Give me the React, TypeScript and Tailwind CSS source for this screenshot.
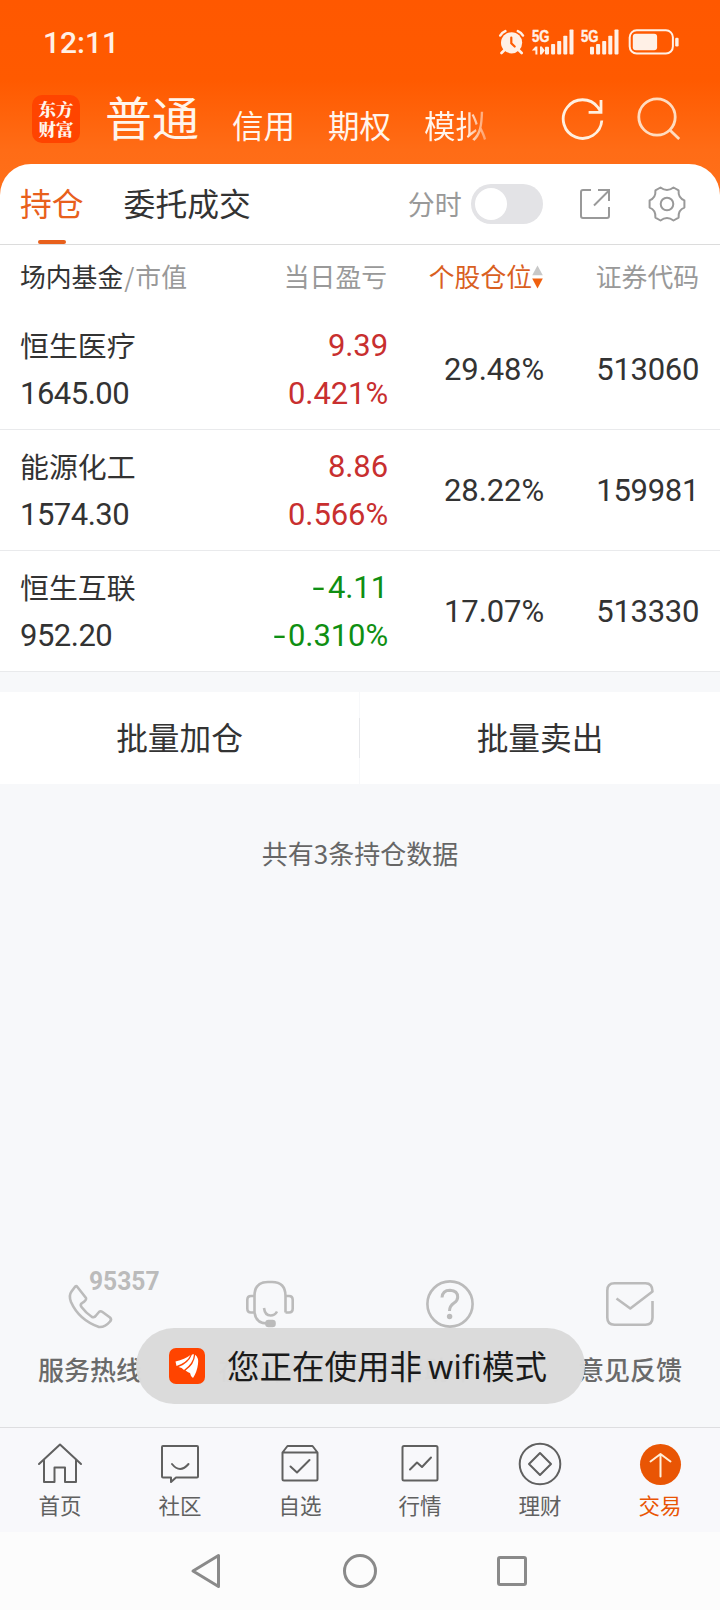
import type { ReactNode } from "react";

const CJK = "font-['Noto_Sans_CJK_SC',sans-serif]";
const NUM = "font-[Roboto,sans-serif]";

function StatusIcons() {
  const bars = [
    [0, 46.7],
    [6.1, 44],
    [12.2, 41],
    [18.3, 35.7],
    [24.5, 29.5],
  ];
  return (
    <svg width="184" height="32" viewBox="498 26 184 32" fill="#fff0e6">
      <circle cx="511.6" cy="42.8" r="10.6" />
      <g stroke="#fff0e6" strokeWidth="2.6" fill="none" strokeLinecap="round">
        <path d="M500.3 35.5a9 9 0 0 1 5-4.4M522.9 35.5a9 9 0 0 0-5-4.4" />
        <path d="M504.5 50l-3 3M518.7 50l3 3" />
      </g>
      <path d="M511.3 37.5v5.8l3.4 3.2" stroke="#ff5a00" strokeWidth="2.2" fill="none" strokeLinecap="round" />
      <g fontFamily="'Liberation Sans', sans-serif" fontWeight="700" fontSize="17" stroke="#fff0e6" strokeWidth="0.4">
        <text x="532" y="41.5" textLength="17.5" lengthAdjust="spacingAndGlyphs">5G</text>
        <text x="581" y="41.5" textLength="17.5" lengthAdjust="spacingAndGlyphs">5G</text>
      </g>
      <path d="M535.4 46.5h2v8h-2v-4h-3.600zM540 46.500h1.800l3 4-3 4h-1.800z" />
      {bars.map(([x, y]) => (
        <g key={x}>
          <rect x={545 + x} y={y} width="4" height={54.4 - y} rx="0.8" />
          <rect x={590 + x} y={y} width="4" height={54.4 - y} rx="0.8" />
        </g>
      ))}
      <rect x="629.7" y="30.3" width="43.2" height="23.2" rx="7" fill="none" stroke="#fff0e6" strokeWidth="2" />
      <rect x="632.8" y="33.7" width="24.3" height="16.6" rx="3" />
      <rect x="675.2" y="37.7" width="3.4" height="8.8" rx="1.2" />
    </svg>
  );
}

function GearIcon() {
  return (
    <svg width="40" height="40" viewBox="-20 -20 40 40" fill="none" stroke="#999" strokeWidth="2" strokeLinejoin="round">
      <path d="M-6.5 -16.5Q0 -11.5 6.5 -16.5L11.6 -13.6Q11 -6 17.4 -3.6V3.6Q11 6 11.6 13.6L6.5 16.5Q0 11.5 -6.5 16.5L-11.6 13.6Q-11 6 -17.4 3.6V-3.6Q-11 -6 -11.6 -13.6Z" />
      <circle r="6.3" />
    </svg>
  );
}

const holdings = [
  { name: "恒生医疗", value: "1645.00", pnl: "9.39", pct: "0.421%", share: "29.48%", code: "513060" },
  { name: "能源化工", value: "1574.30", pnl: "8.86", pct: "0.566%", share: "28.22%", code: "159981" },
  { name: "恒生互联", value: "952.20", pnl: "-4.11", pct: "-0.310%", share: "17.07%", code: "513330" },
];

function Signed({ text }: { text: string }) {
  const negative = text.startsWith("-");
  return (
    <div className={negative ? "text-[#0f8f12]" : "text-[#c82f2f]"}>
      {negative && <span className="mr-[3px] inline-block origin-right scale-x-[1.4]">-</span>}
      {negative ? text.slice(1) : text}
    </div>
  );
}

function Service({ icon, label }: { icon: ReactNode; label: string }) {
  return (
    <div className="flex w-[180px] flex-col items-center">
      <div className="h-[62px]">{icon}</div>
      <div className="mt-[19px] text-[26px] leading-[36px] font-medium text-[#6a6a6a]">{label}</div>
    </div>
  );
}

function Tab({ icon, label, active }: { icon: ReactNode; label: string; active?: boolean }) {
  return (
    <div className={`flex w-[120px] flex-col items-center ${active ? "text-[#e95504]" : "text-[#606060]"}`}>
      <svg width="48" height="48" viewBox="-24 -24 48 48" fill="none" stroke="currentColor" strokeWidth="2" strokeLinejoin="round" strokeLinecap="round">
        {icon}
      </svg>
      <div className="text-[21.5px] leading-[32px]">{label}</div>
    </div>
  );
}

export default function App() {
  return (
    <div className={`flex h-[1610px] w-[720px] flex-col overflow-hidden bg-[#f7f8fa] text-[#333] ${CJK}`}>
      <div className="bg-[linear-gradient(to_bottom,#ff5800_0px,#ff5a00_80px,#ff6c16_150px,#ff701a_195px)]">
        <div className="flex h-[84px] items-center justify-between pr-[38px] pl-[43px]">
          <div className={`${NUM} pt-[1px] text-[30px] leading-[30px] font-medium text-[#fff0e6]`}>12:11</div>
          <StatusIcons />
        </div>

        <div className="flex h-[80px] items-start pt-[11px] pl-[32px] text-[#fff5ec]">
          <div className="flex h-[48px] w-[48px] flex-col items-center justify-center rounded-[10px] bg-[#ff4400] pb-[1px] font-['Noto_Serif_CJK_SC','Noto_Sans_CJK_SC',serif] text-[17.5px] leading-[20px] font-black">
            <span>东方</span>
            <span>财富</span>
          </div>
          <div className="-mt-[6px] ml-[25px] text-[47px] leading-[54px]">普通</div>
          <div className="mt-[11px] flex gap-[33px] pl-[33px] text-[31.5px] leading-[36px]">
            <span>信用</span>
            <span>期权</span>
            <span className="bg-[linear-gradient(to_right,#fff5ec_65%,#ff9a60_100%)] bg-clip-text text-transparent">模拟</span>
          </div>
          <svg className="mt-[3px] ml-[74px]" width="44" height="44" viewBox="562 98 44 44" fill="none" stroke="#fff0e0" strokeWidth="2.8">
            <path d="M602.8 120.5A19.3 19.3 0 1 1 599 107.5L602 112M602 100v12.3h-12.4" />
          </svg>
          <svg className="mt-[1px] ml-[30px]" width="46" height="46" viewBox="636 96 46 46" fill="none" stroke="#ffdcc0" strokeWidth="2.8">
            <circle cx="658" cy="117" r="18.2" />
            <path d="M670.8 130l9.4 9" />
          </svg>
        </div>

        <div className="flex h-[81px] rounded-t-[31px] border-b border-[#dcdcdc] bg-white pl-[20px]">
          <div className="flex flex-col items-center text-[31.8px] leading-[36px] text-[#e8601c]">
            <div className="mt-[20px] h-[56px]">持仓</div>
            <div className="h-[4px] w-[28px] rounded-[2px] bg-[#e8601c]" />
          </div>
          <div className="mt-[20px] ml-[40px] text-[31.8px] leading-[36px]">委托成交</div>
          <div className="mt-[22px] ml-[157px] text-[27px] leading-[36px] text-[#999]">分时</div>
          <div className="mt-[20px] ml-[9px] flex h-[40px] w-[72px] items-center rounded-full bg-[#e3e3e6] pl-[4px]">
            <div className="h-[32px] w-[32px] rounded-full bg-white" />
          </div>
          <svg className="mt-[24px] ml-[36px]" width="32" height="32" viewBox="0 0 32 32" fill="none" stroke="#999" strokeWidth="2">
            <path d="M12 2H4Q2 2 2 4V28Q2 30 4 30H28Q30 30 30 28V19M15 17.500L30 2.500M19 2H30V13" />
          </svg>
          <div className="mt-[20px] ml-[36px]">
            <GearIcon />
          </div>
        </div>
      </div>

      <div className="bg-white">
        <div className="flex h-[64px] items-center pr-[21px] pb-[3px] pl-[20px] text-[25.8px] leading-[36px] text-[#999]">
          <div className="w-[200px]">
            <span className="text-[#333]">场内基金</span>
            <span className="mx-[1px]">/</span>市值
          </div>
          <div className="w-[167px] text-right">当日盈亏</div>
          <div className="flex w-[156px] items-center justify-end text-[#d9601f]">
            个股仓位
            <svg className="mt-[2px]" width="11" height="24" viewBox="0 0 11 24">
              <path d="M5.500 0.500L10.800 10.200H0.200Z" fill="#c8c8c8" />
              <path d="M5.500 23.500L10.800 13.500H0.200Z" fill="#f0600f" />
            </svg>
          </div>
          <div className="grow text-right">证券代码</div>
        </div>
        {holdings.map((h) => (
          <div key={h.code} className="flex h-[121px] items-center border-b border-[#e9eaec] pr-[21px] pl-[20px]">
            <div className="w-[200px]">
              <div className="h-[48px] text-[28.9px] leading-[46px]">{h.name}</div>
              <div className={`${NUM} h-[48px] text-[31px] leading-[50px] tracking-[-0.5px]`}>{h.value}</div>
            </div>
            <div className={`${NUM} w-[168px] text-right text-[31px] leading-[48px] tracking-[-0.1px]`}>
              <div className="pt-[2px]">
                <Signed text={h.pnl} />
                <Signed text={h.pct} />
              </div>
            </div>
            <div className={`${NUM} w-[156px] pt-[2px] text-right text-[31px] leading-[48px] tracking-[-0.1px]`}>{h.share}</div>
            <div className={`${NUM} grow pt-[2px] text-right text-[31px] leading-[48px] tracking-[-0.3px]`}>{h.code}</div>
          </div>
        ))}
      </div>

      <div className="mt-[20px] flex h-[92px] items-center bg-white text-[31.7px]">
        <div className="w-[359px] pb-[3px] text-center leading-[89px]">批量加仓</div>
        <div className="flex h-full w-px items-center bg-[#f7f8fa]">
          <div className="h-[40px] w-px bg-[#e6e7ea]" />
        </div>
        <div className="w-[360px] pb-[3px] text-center leading-[89px]">批量卖出</div>
      </div>

      <div className="mt-[51px] text-center text-[26px] leading-[36px] text-[#666]">共有3条持仓数据</div>

      <div className="relative mt-auto h-[157px]">
        <div className="flex">
          <Service
            label="服务热线"
            icon={
              <svg className="overflow-visible" width="150" height="62" viewBox="15 1270 150 62" fill="none" stroke="#bbb" strokeWidth="2.6" strokeLinejoin="round">
                <path d="M77 1286.500L86 1298Q87 1300 81.500 1303.500Q80 1305 81.500 1307Q86 1313 92 1317Q94.500 1318 96 1315.500L99 1312Q100.500 1310.500 102.500 1312L110 1317.500Q112 1319.500 110 1321.500Q105 1327.500 99 1327Q79 1320 71 1302Q68.500 1295.500 71.500 1291.500L74.500 1287.500Q76 1285.500 77 1286.500Z" />
                <text x="89" y="1290" fill="#bbb" stroke="none" fontFamily="Roboto, sans-serif" fontWeight="700" fontSize="25" textLength="70.500" lengthAdjust="spacingAndGlyphs">95357</text>
              </svg>
            }
          />
          <Service
            label="在线客服"
            icon={
              <svg width="52" height="62" viewBox="244 1270 52 62" fill="none" stroke="#bbb" strokeWidth="2.600">
                <path d="M254.500 1312.500V1296Q254.500 1282 268 1282H272Q285.500 1282 285.500 1296V1312.500M254.500 1296H251Q247.300 1296 247.300 1300V1308.500Q247.300 1312.500 251 1312.500H254.500Q256 1323.500 267 1323.500M285.500 1296H289Q292.700 1296 292.700 1300V1308.500Q292.700 1312.500 289 1312.500H285.500M264 1308Q265 1315.500 270.500 1315.500Q275 1315.500 277 1311.500" />
                <rect x="266.500" y="1321" width="8" height="5" rx="2" fill="#bbb" />
              </svg>
            }
          />
          <Service
            label="帮助中心"
            icon={
              <svg width="52" height="62" viewBox="424 1270 52 62" fill="none" stroke="#bbb" strokeWidth="2.600">
                <circle cx="450" cy="1304" r="22.600" />
                <path d="M442 1297.500Q442.500 1290.200 450 1290.200Q457.700 1290.600 457.700 1297Q457.700 1300.500 454 1303Q449.500 1306 449.500 1311" strokeWidth="3" />
                <circle cx="449.600" cy="1316.500" r="2.700" fill="#bbb" stroke="none" />
              </svg>
            }
          />
          <Service
            label="意见反馈"
            icon={
              <svg width="52" height="62" viewBox="604 1270 52 62" fill="none" stroke="#bbb" strokeWidth="2.600">
                <path d="M652.500 1301V1317.500Q652.500 1324.700 645.500 1324.700H614.500Q607.300 1324.700 607.300 1317.500V1290.500Q607.300 1283.300 614.500 1283.300H645.500Q652.500 1283.300 652.500 1291.500L630.300 1308.500L616.500 1298.500" strokeLinejoin="round" />
              </svg>
            }
          />
        </div>
        <div className="absolute top-[58px] left-[136px] flex h-[76px] w-[449px] items-center rounded-full bg-[#dadadafa] pl-[33px] text-[32.5px] text-[#1a1a1a]">
          <svg width="36" height="36" viewBox="0 0 36 36">
            <rect width="36" height="36" rx="7" fill="#ff4400" />
            <g fill="#fff">
              <path d="M6.500 13.500Q16 11 21.500 7Q18 14.500 7.500 18Z" />
              <path d="M9.500 19Q19.500 15.500 23 6.500L25 6.200Q24.500 15 15 22Q13 19.500 9.500 19Z" />
              <path d="M16.500 22.500Q25.500 16.500 26.200 6.800Q30 10 29 16Q28 24 24 30Q21.500 28.500 21 25Q19.500 24.500 16.500 22.500Z" />
            </g>
          </svg>
          <div className="ml-[22px] leading-[42px] whitespace-nowrap">
            您正在使用非<span className="ml-[6px] font-['Noto_Sans',sans-serif] text-[32px] tracking-[0.3px]">wifi</span>模式
          </div>
        </div>
      </div>

      <div className="flex h-[105px] border-t border-[#dedee0] bg-[#f8f8fb] pt-[13px]">
        <Tab label="首页" icon={<path d="M-21 -1L0 -20.500L21 -1M-16 -4.500V17H-5.500V2.500H5V17H16V-4.500" />} />
        <Tab label="社区" icon={<path d="M-17 -19H17Q18 -19 18 -18V11.500Q18 12.500 17 12.500H-4L-9 17V12.500H-17Q-18 12.500 -18 11.500V-18Q-18 -19 -17 -19ZM-8 -1Q0 9 8.500 -1" />} />
        <Tab label="自选" icon={<path d="M-17.500 -12.500L-12.500 -19H12.500L17.500 -12.500ZM-17.500 -12.500V14Q-17.500 15.500 -16 15.500H16Q17.500 15.500 17.500 14V-12.500M-9.500 1.500L-3 7.500L9.500 -5" />} />
        <Tab label="行情" icon={<path d="M-16 -19H16Q17.500 -19 17.500 -17.500V14Q17.500 15.500 16 15.500H-16Q-17.500 15.500 -17.500 14V-17.500Q-17.500 -19 -16 -19ZM-10 4.500L-3 -2.500L2 2L11 -7.500" />} />
        <Tab
          label="理财"
          icon={
            <>
              <circle cy="-1" r="20.300" />
              <path d="M0 -12L11 -1L0 10L-11 -1Z" />
            </>
          }
        />
        <Tab
          active
          label="交易"
          icon={
            <>
              <circle cx="0.500" cy="-0.500" r="20.500" fill="#e95504" stroke="none" />
              <path d="M0.500 11.500V-10.500M-9.500 -3.500L0.500 -11L10.500 -3.500" stroke="#ffefd9" />
            </>
          }
        />
      </div>

      <div className="flex h-[78px] shrink-0 items-center bg-[#fcfcfc] pl-[190px]">
        <svg width="32" height="38" viewBox="190 1552 32 38" fill="none" stroke="#8a8a8a" strokeWidth="3" strokeLinejoin="round">
          <path d="M193 1571L218.500 1555.500V1586.500Z" />
        </svg>
        <div className="ml-[121px] h-[34px] w-[34px] rounded-full border-[3px] border-[#8a8a8a]" />
        <div className="ml-[120px] h-[30px] w-[30px] rounded-[3px] border-[3px] border-[#8a8a8a]" />
      </div>
    </div>
  );
}
